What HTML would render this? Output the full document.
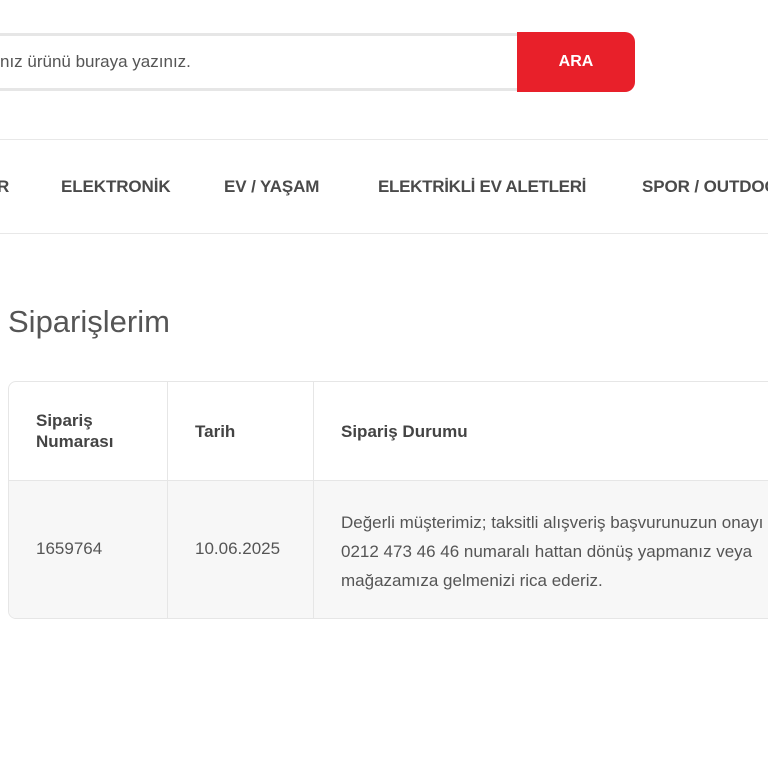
<!DOCTYPE html>
<html><head><meta charset="utf-8"><style>
*{margin:0;padding:0;box-sizing:border-box}
body{width:768px;height:768px;overflow:hidden;background:#fff;font-family:"Liberation Sans",sans-serif;color:#444;position:relative}
.a{position:absolute;white-space:nowrap}
.search{left:-20px;top:33px;width:540px;height:58px;border:3px solid #e6e6e6;border-right:none;border-radius:8px 0 0 8px}
.btn{left:517px;top:32px;width:118px;height:60px;background:#e8202a;border-radius:0 10px 10px 0;color:#fff;font-weight:bold;font-size:16px;text-align:center;line-height:60px}
.nav{top:177px;font-size:17px;font-weight:bold;color:#4a4a4a;letter-spacing:-0.1px}
.tbl{left:8px;top:381px;width:800px;height:238px;border:1px solid #e6e6e6;border-radius:8px;overflow:hidden}
.t{font-size:17px;color:#555;letter-spacing:0}
</style></head><body>
<div class="a search"></div>
<div class="a" style="left:0;top:52px;font-size:17px;color:#555">nız ürünü buraya yazınız.</div>
<div class="a btn">ARA</div>
<div class="a" style="left:0;top:139px;width:768px;height:1px;background:#e8e8e8"></div>
<div class="a" style="left:0;top:233px;width:768px;height:1px;background:#e8e8e8"></div>
<div class="a nav" style="left:-3px">R</div>
<div class="a nav" style="left:61px">ELEKTRONİK</div>
<div class="a nav" style="left:224px">EV / YAŞAM</div>
<div class="a nav" style="left:378px;letter-spacing:-0.3px">ELEKTRİKLİ EV ALETLERİ</div>
<div class="a nav" style="left:642px">SPOR / OUTDOOR</div>
<div class="a" style="left:8px;top:304px;font-size:31px;color:#555">Siparişlerim</div>
<div class="a tbl">
 <div class="a" style="left:0;top:98px;width:800px;height:140px;background:#f7f7f7;border-top:1px solid #e6e6e6"></div>
 <div class="a" style="left:158px;top:0;width:1px;height:238px;background:#e6e6e6"></div>
 <div class="a" style="left:304px;top:0;width:1px;height:238px;background:#e6e6e6"></div>
 <div class="a" style="left:27px;top:28px;font-size:17px;font-weight:bold;line-height:21px">Sipariş<br>Numarası</div>
 <div class="a" style="left:186px;top:40px;font-size:17px;font-weight:bold">Tarih</div>
 <div class="a" style="left:332px;top:40px;font-size:17px;font-weight:bold">Sipariş Durumu</div>
 <div class="a t" style="left:27px;top:157px">1659764</div>
 <div class="a t" style="left:186px;top:157px">10.06.2025</div>
 <div class="a t" style="left:332px;top:126px;line-height:29px">Değerli müşterimiz; taksitli alışveriş başvurunuzun onayı için<br>0212 473 46 46 numaralı hattan dönüş yapmanız veya<br>mağazamıza gelmenizi rica ederiz.</div>
</div>
</body></html>
